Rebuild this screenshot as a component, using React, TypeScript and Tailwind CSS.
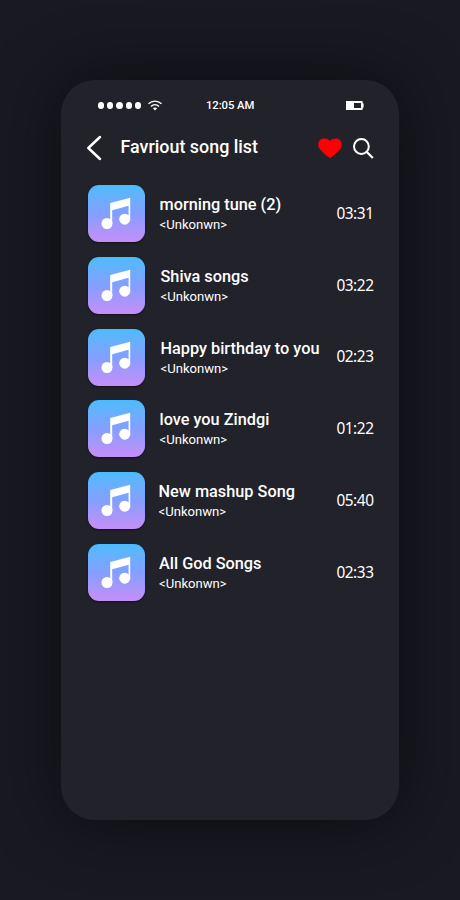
import { clsx } from "clsx";

const songs = [
  { title: "morning tune (2)", duration: "03:31", indent: "pl-[14.5px]" },
  { title: "Shiva songs", duration: "03:22", indent: "pl-[15.5px]" },
  { title: "Happy birthday to you", duration: "02:23", indent: "pl-[15.5px]" },
  { title: "love you Zindgi", duration: "01:22", indent: "pl-[14.5px]" },
  { title: "New mashup Song", duration: "05:40", indent: "pl-[13.5px]" },
  { title: "All God Songs", duration: "02:33", indent: "pl-[14px]" },
];

function WifiIcon() {
  return (
    <svg className="ml-[6.5px] h-[11px] w-[14px]" viewBox="0 0 14 11" fill="none" stroke="white" strokeWidth="1.4">
      <path d="M0.5 3.8C4.2 0.2 9.8 0.2 13.5 3.8" />
      <path d="M3 6.4C5.3 4.2 8.7 4.2 11 6.4" />
      <path d="M4.9 8.2C6.1 7.2 7.9 7.2 9.1 8.2L7 10.4Z" fill="white" stroke="none" />
    </svg>
  );
}

function BatteryIcon() {
  return (
    <svg className="h-[9px] w-[18px]" viewBox="0 0 18 9" fill="white">
      <path
        fillRule="evenodd"
        d="M0 0H15.5Q16.8 0 16.8 1.3V2.5H17.6V6.5H16.8V7.7Q16.8 9 15.5 9H0ZM8 2V7H15V2Z"
      />
    </svg>
  );
}

function BackIcon() {
  return (
    <svg className="-ml-px h-[26px] w-[16px]" viewBox="0 0 16 26" fill="none" stroke="white" strokeWidth="2.5">
      <path d="M14 2L2.3 13L14 24" strokeLinecap="round" strokeLinejoin="round" />
    </svg>
  );
}

function HeartIcon() {
  return (
    <svg className="h-[21px] w-[24px]" viewBox="0 0 24 21" fill="#fe0000">
      <path d="M12 20.4C10.8 19.3 7.8 17.3 4.5 14.1C1.6 11.3 0.2 9.2 0.2 6.3C0.2 2.8 2.7 0.4 6 0.4C8.7 0.4 10.8 1.2 12 2.9C13.2 1.2 15.3 0.4 18 0.4C21.3 0.4 23.8 2.8 23.8 6.3C23.8 9.2 22.4 11.3 19.5 14.1C16.2 17.3 13.2 19.3 12 20.4Z" />
    </svg>
  );
}

function SearchIcon() {
  return (
    <svg className="h-[21px] w-[21px]" viewBox="0 0 21 21" fill="none" stroke="white" strokeWidth="2">
      <circle cx="8.4" cy="8.5" r="7.4" />
      <path d="M13.8 14L19.8 20" strokeWidth="2.3" />
    </svg>
  );
}

function Cover() {
  return (
    <div className="size-[57px] shrink-0 rounded-[11px] bg-linear-to-b from-[#48bcfd] via-[#829fff] to-[#c58df7] shadow-[0_1px_2px_#11111c]">
      <svg className="size-[57px]" viewBox="0 0 57 57" fill="white">
        <path fillRule="evenodd" d="M22.2 18L42.2 12.8V34.5H40.6V20.8L24.2 25.2V38.5H22.2Z" />
        <circle cx="19" cy="38.5" r="5.5" />
        <circle cx="36.7" cy="34.2" r="5.5" />
      </svg>
    </div>
  );
}

export default function App() {
  return (
    <div className="flex h-[900px] w-[460px] justify-center bg-[#191923] pt-20 font-['Roboto',sans-serif] text-white">
      <main className="h-[740px] w-[338px] rounded-[34px] bg-[#22222b] pr-[25px] pl-[26px] shadow-[0_0_65px_#0c0d0f]">
        <div className="flex h-[50px] items-center pt-px pr-[10px] pl-[10.5px]">
          <div className="flex items-center">
            <div className="flex gap-[3px]">
              {[0, 1, 2, 3, 4].map((dot) => (
                <span key={dot} className="size-[6.4px] rounded-full bg-white" />
              ))}
            </div>
            <WifiIcon />
          </div>
          <span className="mr-auto ml-[44px] text-[11.3px] leading-none font-medium tracking-[-0.05px]">12:05 AM</span>
          <BatteryIcon />
        </div>

        <header className="flex h-[36px] items-center">
          <BackIcon />
          <h1 className="-mt-[3px] ml-[18.5px] flex-1 text-[17.9px] leading-none font-medium">Favriout song list</h1>
          <HeartIcon />
          <span className="ml-[11px]">
            <SearchIcon />
          </span>
        </header>

        <ul className="mt-[19px] flex flex-col gap-[14.8px] pl-[1px]">
          {songs.map((song) => (
            <li key={song.title} className="flex h-[57px] items-center">
              <Cover />
              <div className={clsx("flex-1 pt-[3px] whitespace-nowrap", song.indent)}>
                <p className="text-[16.3px] leading-[20px] font-medium">{song.title}</p>
                <p className="text-[13.1px] leading-[20px]">&lt;Unkonwn&gt;</p>
              </div>
              <span className="mr-[0.5px] font-['Noto_Sans',sans-serif] text-[15.4px] leading-none tracking-[-0.45px]">
                {song.duration}
              </span>
            </li>
          ))}
        </ul>
      </main>
    </div>
  );
}
